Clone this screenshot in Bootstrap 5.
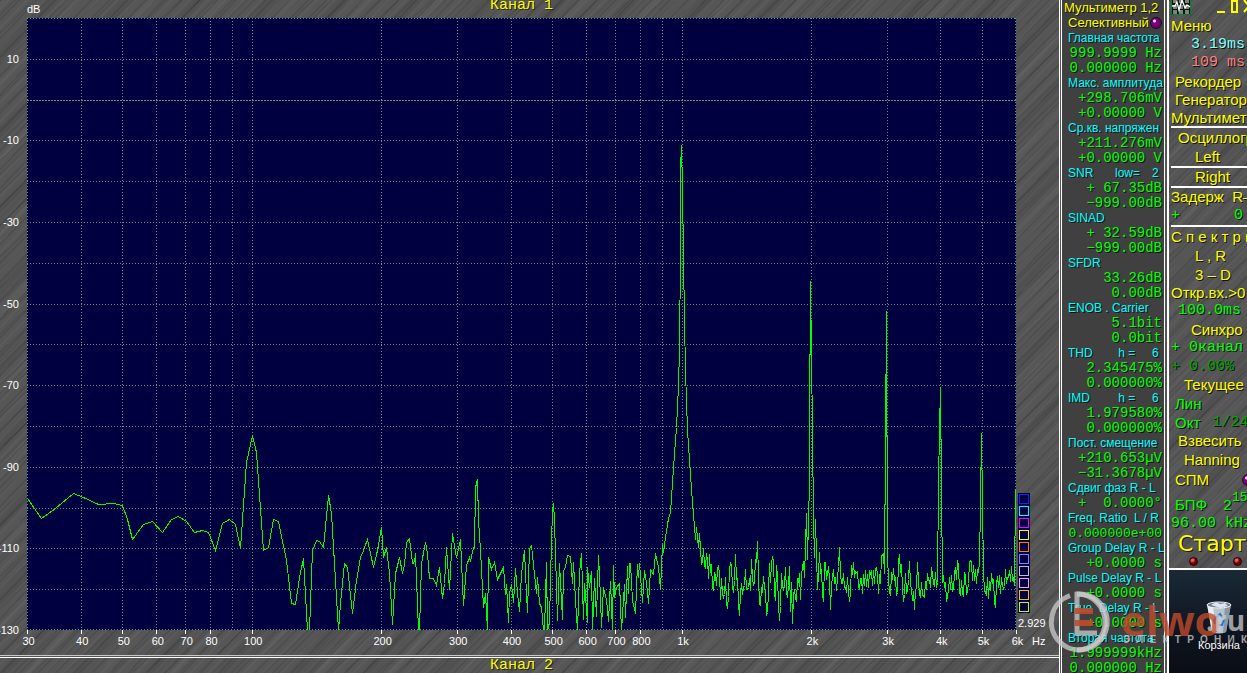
<!DOCTYPE html>
<html lang="ru">
<head>
<meta charset="utf-8">
<meta name="viewport" content="width=device-width, initial-scale=1">
<title>Анализатор спектра</title>
<link href="https://cdn.jsdelivr.net/npm/bootstrap@5.3.0/dist/css/bootstrap.min.css" rel="stylesheet">
<script src="https://cdn.jsdelivr.net/npm/bootstrap@5.3.0/dist/js/bootstrap.bundle.min.js"></script>
<style>
:root { --sans: "Liberation Sans", Arial, sans-serif; --mono: "Liberation Mono", "Courier New", monospace; }
body { background: #0c1018; font-family: var(--sans); font-size: 12px; line-height: 15px; color: #fff; }
button { background: none; border: 0; padding: 0; font: inherit; color: inherit; text-align: inherit; text-shadow: inherit; }
.metal {
  background-color: #565656;
  background-image:
    repeating-linear-gradient(134deg, rgba(0,0,0,.11) 0 1px, transparent 2px 5px, rgba(255,255,255,.03) 6px 7px, transparent 8px 13px),
    repeating-linear-gradient(136deg, rgba(0,0,0,.09) 0 1px, transparent 2px 9px, rgba(0,0,0,.07) 10px 11px, transparent 12px 23px),
    repeating-linear-gradient(133deg, rgba(255,255,255,.03) 0 3px, transparent 8px 31px, rgba(0,0,0,.07) 38px 41px, transparent 47px 53px);
}
.shell { height: 100vh; }
.mono-title { font: 15px/16px var(--mono); color: #ff0; text-shadow: 1px 1px #222; }
.head-title { grid-column: 2; grid-row: 1; line-height: 12px; }
.foot-row { height: 15px; padding-right: 16px; }
/* spectrum chart */
.chart-grid { display: grid; grid-template-columns: 27px minmax(0, 1fr) 43px; grid-template-rows: 18px minmax(0, 1fr) 25px; font-size: 11px; line-height: 13px; }
.chart-grid .plot { width: 100%; height: 100%; background: #000040; }
.unit-y { grid-column: 1; grid-row: 1; padding: 3px 0 0 27px; }
.unit-x { align-self: start; padding: 5px 0 0 16px; }
.legend-col { padding-left: 2px; }
.legend-col output { padding-top: 4px; }
.tick-y { right: 8px; transform: translateY(-50%); }
.tick-x { top: 0; width: 40px; margin-left: -20px; padding: 5px 0 0 3px; text-align: center; }
.tick-x::before { content: ""; position: absolute; left: 20px; top: 0; height: 4px; border-left: 1px solid #fff; }
.swatch { width: 12px; height: 12px; background: #000040; padding: 1px; }
.swatch i { display: block; height: 10px; border: 1px solid; }
.divider { height: 3px; border-top: 1px solid #c8c8c8; border-bottom: 1px solid #fff; background: #555; }
/* multimeter */
.meter { width: 109px; border-left: 1px solid #fff; border-right: 1px solid #fff; background: #555; padding: 0 2px 0 1px; text-shadow: 1px 1px #111; }
.meter-in { border-left: 1px solid #fff; border-right: 1px solid #fff; background: #404040; padding: 0 2px 0 6px; height: 100%; }
.meter h2, .meter label, .meter output, .meter .param { display: flex; height: 15px; line-height: 15px; margin: 0; white-space: pre; }
.meter h2, .meter label { font-size: 13px; font-weight: 400; color: #ff0; }
.meter h2 { margin-left: -4px; }
.meter h3, .meter .param { font-size: 12px; line-height: 16px; height: 15px; font-weight: 400; color: #0ff; margin: 0; white-space: pre; }
.meter output { font: 14px/17px var(--mono); color: #0f0; justify-content: flex-end; }
.meter output.long { font-size: 13px; }
.led { width: 12px; height: 12px; border-radius: 50%; border: 1px solid #111; background: radial-gradient(circle at 35% 30%, #fcf 0 1px, #800080 2px, #700070 6px); }
/* side menu */
.side { width: 79px; border-left: 1px solid #fff; font-size: 15px; color: #ff0; text-shadow: 1px 1px #111; }
.side .a18, .side .a19 { display: flex; flex-shrink: 0; width: 100%; height: 18px; line-height: 18px; white-space: pre; }
.side .a19 { height: 19px; line-height: 19px; }
.side hr { height: 2px; margin: 0 0 0 2px; border: 0; background: #fff; opacity: 1; flex-shrink: 0; }
.side .num { font-family: var(--mono); }
.in-1 { padding-left: 2px; } .in-2 { padding-left: 6px; } .in-3 { padding-left: 15px; } .in-4 { padding-left: 26px; }
.in-5 { padding-left: 22px; } .in-6 { padding-left: 9px; }
.lime { color: #0f0; } .dim { color: #00a000; } .ice { color: #80ffff; } .rose { color: #ff8080; }
.top-row { height: 17px; padding-left: 2px; }
.spm { height: 22px; line-height: 22px; gap: 33px; }
.fft { height: 24px; line-height: 27px; }
.fft sup { font-size: 13px; top: -9px; line-height: 0; }
.start { font-family: "DejaVu Sans", sans-serif; font-size: 22px; line-height: 22px; height: 22px; white-space: nowrap; }
.lamps { height: 13px; padding-left: 20px; gap: 35px; }
.lamp { width: 9px; height: 9px; border-radius: 50%; border: 1px solid #200; background: radial-gradient(circle at 35% 30%, #d66 0 1px, #700 3px); }
.desk { background: linear-gradient(#1a2936, #0e1520 60%, #0a0d14); border-top: 2px solid #fff; text-shadow: none; padding: 31px 0 0 22px; gap: 4px; }
.bin-name { font-size: 11px; line-height: 13px; color: #fff; }
/* site mark over the lower right corner */
.mark-over { right: 0; bottom: 18px; width: 200px; height: 66px; pointer-events: none; }
.mark-over .brand { left: 74px; top: 9px; font: bold 42px/44px "Open Sans", sans-serif; color: #c04a2c; opacity: .8; white-space: nowrap; }
.mark-over .zone { left: 159px; top: 14px; font: bold 28px/34px "Open Sans", sans-serif; color: #ccc; opacity: .75; white-space: nowrap; }
.mark-over .tagline { left: 76px; right: 0; top: 45px; font: bold 10px/12px var(--sans); color: #d0d0d0; opacity: .75; }
</style>
</head>
<body class="overflow-hidden">
<div class="shell d-flex position-relative overflow-hidden">

  <main class="flex-grow-1 d-flex flex-column metal overflow-hidden">
    <section class="chart-grid flex-grow-1">
      <div class="unit-y">dB</div>
      <h1 class="mono-title head-title text-center m-0">Канал 1</h1>
      <div></div>
      <div class="position-relative" id="axisY"></div>
      <svg class="plot" viewBox="27 18 989 612" preserveAspectRatio="none" shape-rendering="crispEdges" fill="none" role="img" aria-label="Спектр, канал 1">
        <g id="gridLines" stroke="#5a9a80" stroke-dasharray="1 2"></g>
        <polyline id="trace" stroke="#0f0" stroke-width="1" vector-effect="non-scaling-stroke"/>
      </svg>
      <div class="legend-col d-flex flex-column justify-content-end">
        <div class="d-flex flex-column" id="swatches"></div>
        <output>2.929</output>
      </div>
      <div></div>
      <div class="position-relative" id="axisX"></div>
      <div class="unit-x">Hz</div>
    </section>
    <div class="divider"></div>
    <div class="foot-row"><h1 class="mono-title text-center m-0">Канал 2</h1></div>
  </main>

  <aside class="meter flex-shrink-0 overflow-hidden"><div class="meter-in overflow-hidden">
    <h2>Мультиметр 1,2</h2>
    <label for="selective" class="justify-content-between align-items-center"><span>Селективный</span><button id="selective" class="led flex-shrink-0" aria-label="Селективный"></button></label>
    <h3>Главная частота</h3><output>999.9999 Hz</output><output>0.000000 Hz</output>
    <h3>Макс. амплитуда</h3><output>+298.706mV</output><output>+0.00000 V</output>
    <h3>Ср.кв. напряжен</h3><output>+211.276mV</output><output>+0.00000 V</output>
    <div class="param"><span class="col-6">SNR</span><span class="flex-grow-1">low=</span><span>2 </span></div><output>+ 67.35dB</output><output>−999.00dB</output>
    <h3>SINAD</h3><output>+ 32.59dB</output><output>−999.00dB</output>
    <h3>SFDR</h3><output>33.26dB</output><output>0.00dB</output>
    <h3>ENOB . Carrier</h3><output>5.1bit</output><output>0.0bit</output>
    <div class="param"><span class="col-6">THD</span><span class="flex-grow-1"> h =</span><span>6 </span></div><output>2.345475%</output><output>0.000000%</output>
    <div class="param"><span class="col-6">IMD</span><span class="flex-grow-1"> h =</span><span>6 </span></div><output>1.979580%</output><output>0.000000%</output>
    <h3>Пост. смещение</h3><output>+210.653µV</output><output>−31.3678µV</output>
    <h3>Сдвиг фаз R - L</h3><output>+  0.0000°</output>
    <h3>Freq. Ratio  L / R</h3><output class="long">0.000000e+00</output>
    <h3>Group Delay R - L</h3><output>+0.0000 s</output>
    <h3>Pulse Delay R - L</h3><output>+0.0000 s</output>
    <h3>True  Delay R - L</h3><output>+0.0000 s</output>
    <h3>Вторая частота</h3><output>1.999999kHz</output><output>0.000000 Hz</output>
  </div></aside>

  <nav class="side metal flex-shrink-0 d-flex flex-column overflow-hidden">
    <div class="top-row d-flex flex-shrink-0 justify-content-between">
      <svg width="20" height="15" viewBox="0 0 20 15"><path fill="#001c08" d="M0 0h20v15H0z"/><path fill="none" stroke="#008030" d="M.5 0v14.5h19V0"/><path fill="#808080" d="M2 0h4v3H2zm6 0h4v3H8zm6 0h4v3h-4zM2 5h4v4H2zm6 0h4v4H8zm6 0h4v4h-4zM2 10h4v4H2zm6 0h4v4H8zm6 0h4v4h-4z"/><path d="M1 6h3l2-4 2 8 3-10 3 8 2-3 3 2" fill="none" stroke="#fff" stroke-width="1.3"/></svg>
      <svg width="30" height="15" viewBox="0 0 30 15" fill="none" stroke="#ff0" stroke-width="2" role="img" aria-label="Окно"><path d="M0 12h8M15 1h5v11h-5zM27 0l5 6-5 6"/></svg>
    </div>
    <button class="a18 in-1">Меню</button>
    <div class="a19 num ice in-5">3.19ms</div>
    <div class="a18 num rose in-5">109 ms</div>
    <button class="a19 in-2">Рекордер</button>
    <button class="a18 in-2">Генератор</button>
    <button class="a18 in-1" style="height:17px">Мультиметр</button>
    <hr>
    <button class="a19 in-6">Осциллограф</button>
    <button class="a19 in-4">Left</button>
    <hr>
    <button class="a18 in-4">Right</button>
    <hr>
    <button class="a18 in-1">Задерж  R–L</button>
    <div class="a19 num in-1 lime">+      0</div>
    <hr>
    <button class="a19 in-1">С п е к т р ы</button>
    <button class="a19 in-4">L , R</button>
    <button class="a19 in-4">3 – D</button>
    <button class="a18 in-1">Откр.вх.&gt;0</button>
    <div class="a18 num in-6 lime">100.0ms</div>
    <button class="a19 in-5">Синхро</button>
    <div class="a18 num in-1 lime">+ 0канал</div>
    <div class="a19 num in-1 dim">+ 0.00%</div>
    <button class="a18 in-3">Текущее</button>
    <button class="a19 in-2 lime">Лин</button>
    <button class="a19 in-2 lime"><span>Окт  </span><span class="num dim ps-1">1/24</span></button>
    <button class="a18 in-6">Взвесить</button>
    <button class="a19 in-3">Hanning</button>
    <button class="spm in-2 d-flex align-items-center flex-shrink-0"><span>СПМ</span><span class="led flex-shrink-0"></span></button>
    <div class="fft in-2 lime flex-shrink-0 text-nowrap"><span class="pe-3">БПФ</span><span class="num">2<sup>15</sup></span></div>
    <div class="a18 num in-1 lime">96.00 kHz</div>
    <button class="start flex-shrink-0 in-6">Старт</button>
    <div class="lamps d-flex flex-shrink-0 align-items-center"><span class="lamp"></span><span class="lamp"></span></div>
    <div class="desk flex-grow-1 d-flex flex-column align-items-center">
      <svg class="flex-shrink-0" width="28" height="34" viewBox="0 0 28 34"><path d="M2 3l5 28q7 3 14 0l5-28z" fill="#b8c4cc"/><path d="M2 3l5 28 4 1L8 4z" fill="#e8eef2"/><path d="M26 3l-5 28-3 1 2-28z" fill="#8898a4"/><ellipse cx="14" cy="4" rx="12" ry="3" fill="#6b7b88" stroke="#eef4f8"/><path d="M6 4l5-3 4 2 5-1 3 3-8 2z" fill="#dde6ec"/><path d="M11 17l4-4 3 4m1 2l-2 5h-4m-3-1l-1-4 3-2" fill="none" stroke="#2878d0" stroke-width="2"/></svg>
      <a href="#" class="bin-name text-decoration-none">Корзина</a>
    </div>
  </nav>

  <div class="mark-over position-absolute">
    <svg class="position-absolute" width="66" height="66" viewBox="0 0 66 66" fill="none"><path d="M23 6.5A28 28 0 1 0 30 5v39h20" stroke="#ccc" stroke-width="5" opacity=".75"/><path d="M30 5a28 28 0 0 1 0 56" stroke="#ccc" stroke-width="5" opacity=".75"/><path d="M28 19h18v6H28zM28 31h18v6H28z" fill="#c04a2c" opacity=".9"/></svg>
    <span class="brand position-absolute">elwo</span><span class="zone position-absolute">.ru</span>
    <div class="tagline position-absolute d-flex justify-content-between"><span>Э</span><span>Л</span><span>Е</span><span>К</span><span>Т</span><span>Р</span><span>О</span><span>Н</span><span>И</span><span>К</span></div>
  </div>
</div>

<script>
const F0 = 30, F1 = 6000, TOP = 20, BOTTOM = -130;
const fx = f => Math.log(f / F0) / Math.log(F1 / F0);
const dy = d => (TOP - d) / (TOP - BOTTOM);
const lines = [];
for (let d = TOP; d >= BOTTOM; d -= 10) {
  const y = Math.min(Math.round(18 + 612 * dy(d)), 629) + .5;
  lines.push(`<path d="M27 ${y}H1016"${d === 0 ? ' stroke-dasharray="2 1"' : ''}/>`);
}
for (const f of [30,40,50,60,70,80,90,100,200,300,400,500,600,700,800,900,1000,2000,3000,4000,5000,6000]) {
  const x = Math.min(Math.round(27 + 989 * fx(f)), 1015) + .5;
  lines.push(`<path d="M${x} 18V630"/>`);
}
gridLines.innerHTML = lines.join('');
for (let d = 10; d >= BOTTOM; d -= 20)
  axisY.innerHTML += `<span class="tick-y position-absolute" style="top:${dy(d) * 100}%">${d}</span>`;
for (const f of [30,40,50,60,70,80,100,200,300,400,500,600,700,800,1000,2000,3000,4000,5000,6000])
  axisX.innerHTML += `<span class="tick-x position-absolute" style="left:${fx(f) * 100}%">${f < 1000 ? f : f / 1000 + 'k'}</span>`;
for (const c of ['#2020ff','#00ffff','#ff00ff','#ffff00','#ff8000','#8080ff','#c0c0c0','#ffa0e0','#ffc000','#c0ff00'])
  swatches.innerHTML += `<button class="swatch" style="color:${c}" aria-label="Цвет ${c}"><i></i></button>`;

const points = `27,498 41,518 55,508 73,493 83,497 98,504 113,503 122,505 127,519 132,539 143,524 152,521 162,532 171,519 178,516 186,521 194,532 202,530 208,532 215,550 222,523 229,519 235,524 240,548 246,462 252,435 256,452 263,550 268,547 273,519 278,521 286,560 291,603 295,604 299,577 303,558 307,630 309,630 312,550 316,540 319,541 323,547 328,495 331,513 338,630 340,603 344,563 347,567 352,613 356,580 360,557 363,550 367,539 373,567 377,550 381,527 383,557 386,547 389,573 392,624 395,573 399,557 402,573 404,564 406,542 409,538 412,563 414,562 415,553 418,630 419,630 421,563 425,542 427,553 429,578 433,578 436,585 439,567 442,598 444,583 446,547 449,589 452,533 456,557 460,539 463,605 466,565 469,557 470,561 473,547 474,547 475,487 477,479 478,520 480,550 483,607 485,593 487,630 488,557 491,569 494,562 497,579 503,567 505,594 506,584 508,622 509,593 511,584 513,602 515,568 517,593 519,611 521,573 524,550 525,573 527,612 529,548 531,545 534,574 536,593 537,577 539,603 541,607 543,630 544,630 546,562 547,630 549,622 551,540 552,511 553,503 554,520 556,587 557,620 559,563 562,619 563,570 565,567 567,555 570,556 572,583 573,562 575,600 577,630 579,573 581,553 583,619 584,583 587,622 587,567 589,587 591,571 592,630 594,578 596,616 598,555 600,597 601,627 603,587 606,599 608,621 610,581 612,630 613,565 614,597 616,587 619,583 621,630 624,584 625,617 627,566 628,593 629,563 630,563 632,600 635,613 637,564 638,577 639,563 642,602 644,570 646,582 648,603 650,569 653,574 655,553 658,567 660,589 662,544 663,552 665,537 668,518 670,512 673,467 676,427 678,385 679,349 680,252 680,168 681,145 682,187 683,258 684,320 685,371 687,430 690,475 692,502 695,539 696,527 698,547 699,533 701,564 703,548 705,567 706,553 708,578 709,554 713,590 714,572 716,585 718,565 720,599 721,578 723,597 725,577 727,608 730,563 733,592 735,554 739,615 740,593 743,587 745,569 747,589 749,578 750,590 751,559 753,585 757,541 759,604 761,587 764,587 767,612 769,563 770,582 772,557 775,600 776,565 779,620 781,573 783,589 785,567 787,597 789,566 790,611 791,582 792,623 794,589 795,597 799,573 800,599 802,567 804,577 806,513 807,559 809,482 809,430 810,281 812,430 813,520 814,557 815,519 817,589 819,552 823,601 824,562 827,573 828,566 830,609 832,577 834,583 837,578 839,547 841,583 843,573 845,587 847,577 849,601 851,565 854,577 856,572 859,589 860,578 862,593 865,570 868,587 870,573 872,585 876,567 878,593 882,554 884,573 885,440 886,311 887,557 889,592 893,568 895,577 897,592 898,562 901,564 903,601 905,573 907,590 909,561 911,588 914,609 917,562 919,593 921,582 923,596 927,573 929,580 932,573 933,583 935,572 937,582 938,482 939,430 940,387 941,489 942,582 943,575 947,596 949,577 953,588 954,573 958,565 959,592 961,580 963,596 964,573 967,590 970,560 972,580 975,569 976,583 979,562 980,502 981,433 983,573 985,592 987,577 988,598 991,573 993,580 995,607 996,583 1002,585 1003,588 1005,569 1007,577 1009,570 1013,577 1014,585 1015,489`
  .split(' ').map(p => p.split(',').map(Number));
const ripple = [9, -8, 5, -11, 7, -4, 10, -7, 3, -9];
const dense = [];
points.forEach(([x, y], i) => {
  dense.push([x, y]);
  const next = points[i + 1];
  if (!next || x < 700 || Math.min(y, next[1]) < 540) return;
  for (let c = x + 1; c < next[0]; c++)
    dense.push([c, Math.round(y + (next[1] - y) * (c - x) / (next[0] - x)) + ripple[c % 10]]);
});
trace.setAttribute('points', dense.map(([x, y]) => `${x + .5},${y + .5}`).join(' '));
</script>
</body>
</html>
